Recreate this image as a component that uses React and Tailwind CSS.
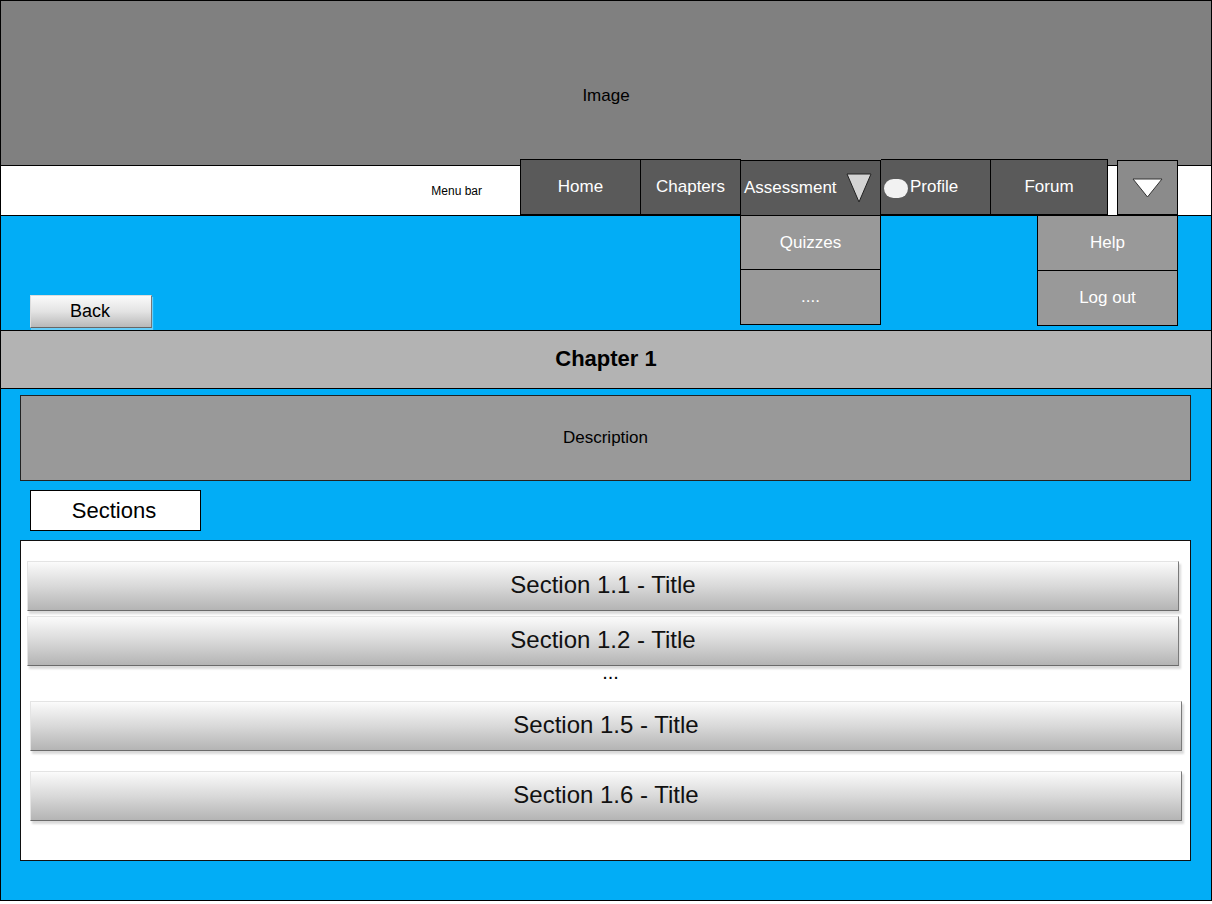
import React from "react";

const font = { fontFamily: '"Liberation Sans", Arial, sans-serif' };

function SectionButton({ title }) {
  return (
    <div className="h-[50px] flex items-center justify-center pb-[3px] border border-[#e4e4e4] border-b-[#6a6a6a] border-r-[#7a7a7a] bg-gradient-to-b from-[#fbfbfb] via-[#d9d9d9] to-[#b4b4b4] shadow-[2px_3px_2px_rgba(0,0,0,0.15)] text-[24px] text-[#111]">
      {title}
    </div>
  );
}

function NavItem({ children, className = "", justify = "justify-center" }) {
  return (
    <div
      className={
        "h-[56px] flex items-center bg-[#5a5a5a] border border-black text-white text-[17px] " +
        justify +
        " " +
        className
      }
    >
      {children}
    </div>
  );
}

export default function App() {
  return (
    <div style={font} className="w-[1212px] h-[901px] border border-black bg-[#02adf6] flex flex-col overflow-hidden">
      {/* header image */}
      <div className="h-[164px] bg-[#808080] flex items-center justify-center text-[17px] text-black pt-[26px]">
        Image
      </div>

      {/* menu bar */}
      <div className="relative h-[51px] bg-white border-t border-b border-black flex items-end z-10">
        <div className="w-[519px] h-full flex items-center justify-end pr-[38px] text-[12px] text-black">
          Menu bar
        </div>
        <div className="flex items-end">
          <NavItem className="w-[121px] pb-[1px]">Home</NavItem>
          <NavItem className="w-[100px] border-l-0 pb-[1px]">Chapters</NavItem>
          <div className="relative">
            <NavItem justify="justify-between" className="w-[140px] border-l-0 pl-[3px] pr-[8px] h-[55px] -mb-[1px]">
              <span>Assessment</span>
              <svg width="26" height="30" viewBox="0 0 26 30">
                <polygon points="1,1 25,1 13,29" fill="#d4d4d4" stroke="#222" strokeWidth="1" />
              </svg>
            </NavItem>
            <div className="absolute -left-px top-full w-[141px] bg-[#999] border border-black text-white text-[17px]">
              <div className="h-[54px] flex items-center justify-center border-b border-black">Quizzes</div>
              <div className="h-[54px] flex items-center justify-center">....</div>
            </div>
          </div>
          <NavItem justify="justify-start" className="w-[110px] border-l-0 pl-[3px]">
            <span className="inline-block w-[24px] h-[19px] rounded-full bg-[#f2f2f2] mr-[2px] mt-[2px]" />
            Profile
          </NavItem>
          <NavItem className="w-[117px] border-l-0">Forum</NavItem>
          <div className="relative ml-[9px] self-end">
            <div className="w-[61px] h-[55px] bg-[#8b8b8b] border border-black flex items-center justify-center">
              <svg width="31" height="20" viewBox="0 0 31 20">
                <polygon points="1,1 30,1 15.5,19" fill="#fff" stroke="#333" strokeWidth="1" />
              </svg>
            </div>
            <div className="absolute right-0 top-full w-[141px] bg-[#999] border border-black text-white text-[17px]">
              <div className="h-[55px] flex items-center justify-center border-b border-black">Help</div>
              <div className="h-[54px] flex items-center justify-center">Log out</div>
            </div>
          </div>
        </div>
      </div>

      {/* blue area with back */}
      <div className="h-[114px] pl-[29px] pt-[79px]">
        <div className="w-[122px] h-[33px] flex items-center justify-center pr-[2px] bg-gradient-to-b from-[#fafafa] via-[#e3e3e3] to-[#b9b9b9] border border-[#ddd] border-b-[#666] border-r-[#777] shadow-[1px_2px_1px_rgba(255,255,255,0.4)] text-[18px] text-black">
          Back
        </div>
      </div>

      {/* chapter title */}
      <div className="h-[59px] bg-[#b3b3b3] border-t border-b border-black flex items-center justify-center font-bold text-[22px] text-black pb-[2px]">
        Chapter 1
      </div>

      {/* description */}
      <div className="ml-[19px] mr-[20px] mt-[6px] h-[86px] bg-[#999] border border-[#222] flex items-center justify-center text-[17px] text-black">
        Description
      </div>

      {/* sections label */}
      <div className="ml-[29px] mt-[9px] w-[171px] h-[41px] bg-white border border-black flex items-center justify-center text-[22px] text-black pr-[3px]">
        Sections
      </div>

      {/* sections list */}
      <div className="ml-[19px] mr-[20px] mt-[9px] h-[321px] bg-white border border-[#111] flex flex-col pt-[20px]">
        <div className="ml-[6px] mr-[11px] flex flex-col gap-[5px]">
          <SectionButton title="Section 1.1 - Title" />
          <SectionButton title="Section 1.2 - Title" />
        </div>
        <div className="h-[35px] flex justify-center text-[20px] leading-[12px] text-black pl-[10px]">...</div>
        <div className="ml-[9px] mr-[8px] flex flex-col gap-[20px]">
          <SectionButton title="Section 1.5 - Title" />
          <SectionButton title="Section 1.6 - Title" />
        </div>
      </div>
    </div>
  );
}
